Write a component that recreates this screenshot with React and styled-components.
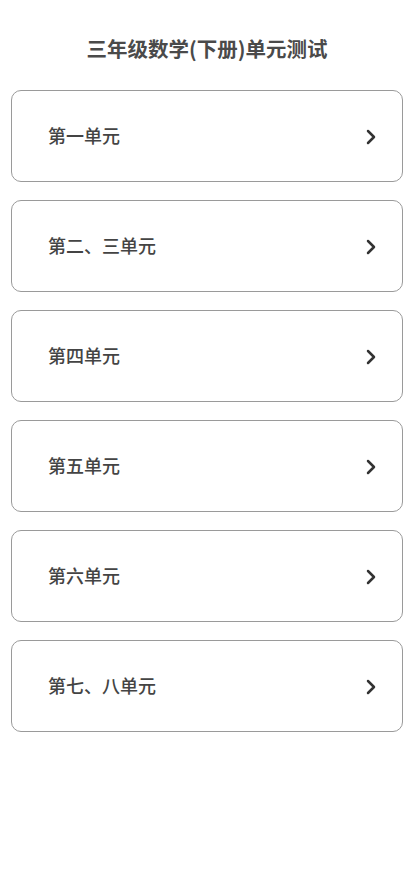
import React from 'react'
import styled, { createGlobalStyle } from 'styled-components'

const GlobalStyle = createGlobalStyle`
  body {
    margin: 0;
    background: #ffffff;
    font-family: "Noto Sans CJK SC", "Noto Sans", sans-serif;
  }
`

const Page = styled.div`
  width: 414px;
  min-height: 896px;
  box-sizing: border-box;
  padding: 33px 11px 0;
  display: flex;
  flex-direction: column;
`

const Title = styled.h1`
  margin: 0 0 27px;
  font-size: 20.5px;
  line-height: 30px;
  font-weight: 700;
  color: #4a4a4a;
  text-align: center;
`

const List = styled.div`
  display: flex;
  flex-direction: column;
  gap: 18px;
`

const Card = styled.div`
  height: 92px;
  box-sizing: border-box;
  border: 1px solid #9a9a9a;
  border-radius: 10px;
  display: flex;
  align-items: center;
  justify-content: space-between;
  padding: 0 25px 2px 36px;
`

const Label = styled.span`
  font-size: 18px;
  line-height: 24px;
  font-weight: 500;
  color: #444444;
`

const Arrow = styled.svg`
  margin-top: 3px;
`

const Chevron = () => (
  <Arrow width="12" height="16" viewBox="0 0 12 16">
    <path d="M3 2l6 6-6 6" fill="none" stroke="#333333" strokeWidth="2.5" strokeLinecap="round" strokeLinejoin="round" />
  </Arrow>
)

const units = ['第一单元', '第二、三单元', '第四单元', '第五单元', '第六单元', '第七、八单元']

const App = () => (
  <>
    <GlobalStyle />
    <Page>
      <Title>三年级数学(下册)单元测试</Title>
      <List>
        {units.map(name => (
          <Card key={name}>
            <Label>{name}</Label>
            <Chevron />
          </Card>
        ))}
      </List>
    </Page>
  </>
)

export default App
